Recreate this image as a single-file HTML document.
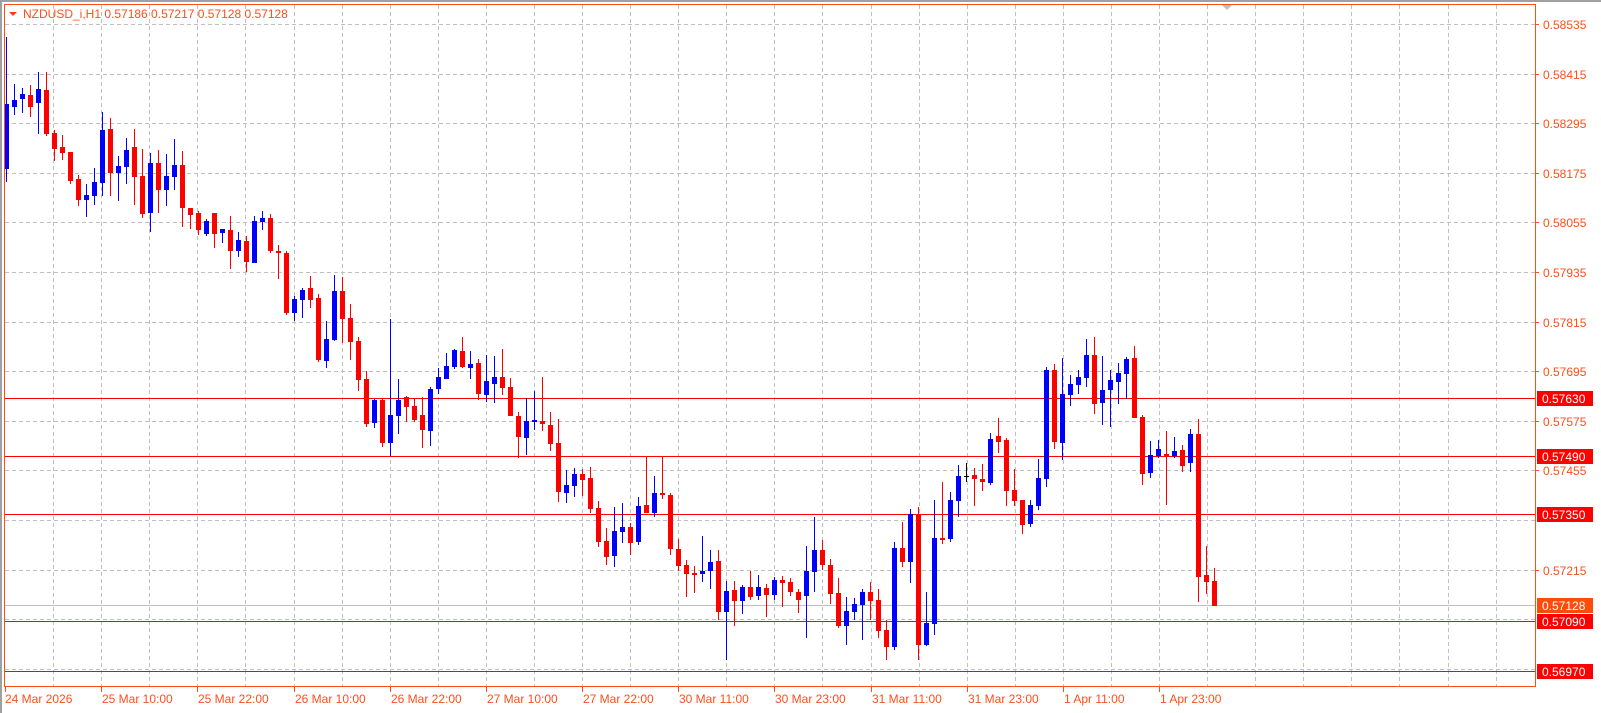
<!DOCTYPE html>
<html><head><meta charset="utf-8"><style>
html,body{margin:0;padding:0;background:#fff;width:1601px;height:713px;overflow:hidden}
svg{display:block;font-family:"Liberation Sans",sans-serif}
</style></head><body>
<svg width="1601" height="713" xmlns="http://www.w3.org/2000/svg">
<rect x="0" y="0" width="1601" height="713" fill="#fff"/>
<rect x="0" y="0" width="1601" height="2" fill="#a0a0a0"/>
<rect x="0" y="0" width="2" height="713" fill="#a0a0a0"/>
<g stroke="#c0c0c0" stroke-dasharray="4,3" stroke-width="1" fill="none">
<path d="M5 24.5H1535M5 74.5H1535M5 123.5H1535M5 173.5H1535M5 222.5H1535M5 272.5H1535M5 322.5H1535M5 371.5H1535M5 421.5H1535M5 470.5H1535M5 520.5H1535M5 570.5H1535M5 619.5H1535M5 669.5H1535"/>
<path d="M53.5 5V687M101.5 5V687M149.5 5V687M197.5 5V687M245.5 5V687M294.5 5V687M342.5 5V687M390.5 5V687M438.5 5V687M486.5 5V687M534.5 5V687M582.5 5V687M630.5 5V687M678.5 5V687M726.5 5V687M774.5 5V687M822.5 5V687M871.5 5V687M919.5 5V687M967.5 5V687M1015.5 5V687M1063.5 5V687M1111.5 5V687M1159.5 5V687M1207.5 5V687M1255.5 5V687M1303.5 5V687M1351.5 5V687M1399.5 5V687M1448.5 5V687M1496.5 5V687"/>
</g>
<path d="M5 605.5H1535" stroke="#c0c0c0" stroke-width="1"/>
<path d="M5 398.5H1535M5 456.5H1535M5 514.5H1535M5 621.5H1535M5 671.5H1535" stroke="#ff0000" stroke-width="1"/>
<path fill="#0000ff" d="
M6 37h1v145h-1zM4 104h5v65h-5z
M14 84h1v31h-1zM12 100h5v7h-5z
M22 88h1v25h-1zM20 94h5v5h-5z
M38 72h1v62h-1zM36 89h5v14h-5z
M86 184h1v33h-1zM84 195h5v5h-5z
M94 168h1v37h-1zM92 182h5v14h-5z
M102 112h1v84h-1zM100 130h5v53h-5z
M118 156h1v45h-1zM116 166h5v7h-5z
M126 138h1v46h-1zM124 150h5v17h-5z
M150 153h1v79h-1zM148 163h5v50h-5z
M166 154h1v52h-1zM164 176h5v14h-5z
M174 139h1v51h-1zM172 165h5v12h-5z
M206 219h1v17h-1zM204 221h5v13h-5z
M222 229h1v14h-1zM220 229h5v4h-5z
M238 232h1v25h-1zM236 240h5v11h-5z
M254 216h1v47h-1zM252 221h5v42h-5z
M262 211h1v19h-1zM260 218h5v4h-5z
M294 296h1v25h-1zM292 299h5v14h-5z
M302 288h1v30h-1zM300 290h5v10h-5z
M326 321h1v47h-1zM324 339h5v22h-5z
M334 275h1v66h-1zM332 291h5v49h-5z
M374 399h1v29h-1zM372 400h5v23h-5z
M390 319h1v137h-1zM388 415h5v28h-5z
M398 379h1v55h-1zM396 400h5v16h-5z
M430 387h1v59h-1zM428 389h5v42h-5z
M438 368h1v26h-1zM436 377h5v12h-5z
M446 353h1v26h-1zM444 366h5v13h-5z
M454 349h1v20h-1zM452 350h5v17h-5z
M470 351h1v28h-1zM468 364h5v4h-5z
M486 355h1v47h-1zM484 381h5v14h-5z
M494 356h1v47h-1zM492 377h5v7h-5z
M526 398h1v57h-1zM524 421h5v17h-5z
M534 391h1v39h-1zM532 420h5v2h-5z
M566 470h1v33h-1zM564 485h5v8h-5z
M574 468h1v29h-1zM572 474h5v12h-5z
M614 507h1v60h-1zM612 531h5v25h-5z
M622 503h1v40h-1zM620 527h5v5h-5z
M638 497h1v48h-1zM636 506h5v36h-5z
M654 476h1v41h-1zM652 493h5v20h-5z
M702 536h1v46h-1zM700 571h5v3h-5z
M710 550h1v39h-1zM708 562h5v9h-5z
M726 581h1v79h-1zM724 591h5v21h-5z
M742 585h1v29h-1zM740 587h5v14h-5z
M758 575h1v25h-1zM756 587h5v9h-5z
M774 577h1v23h-1zM772 580h5v15h-5z
M806 546h1v92h-1zM804 571h5v25h-5z
M814 517h1v75h-1zM812 550h5v22h-5z
M846 597h1v48h-1zM844 611h5v15h-5z
M854 598h1v22h-1zM852 604h5v8h-5z
M862 589h1v51h-1zM860 592h5v13h-5z
M894 542h1v108h-1zM892 548h5v99h-5z
M910 509h1v74h-1zM908 514h5v48h-5z
M926 592h1v54h-1zM924 623h5v22h-5z
M934 500h1v135h-1zM932 538h5v86h-5z
M950 492h1v50h-1zM948 500h5v39h-5z
M958 465h1v52h-1zM956 476h5v25h-5z
M990 433h1v52h-1zM988 439h5v44h-5z
M1030 500h1v27h-1zM1028 505h5v19h-5z
M1038 459h1v51h-1zM1036 478h5v28h-5z
M1046 367h1v120h-1zM1044 370h5v109h-5z
M1062 358h1v102h-1zM1060 394h5v49h-5z
M1070 375h1v31h-1zM1068 384h5v11h-5z
M1078 370h1v24h-1zM1076 377h5v8h-5z
M1086 339h1v48h-1zM1084 355h5v23h-5z
M1102 356h1v69h-1zM1100 390h5v13h-5z
M1110 370h1v57h-1zM1108 380h5v10h-5z
M1118 363h1v41h-1zM1116 373h5v9h-5z
M1126 357h1v42h-1zM1124 359h5v15h-5z
M1150 441h1v37h-1zM1148 455h5v18h-5z
M1158 440h1v18h-1zM1156 449h5v7h-5z
M1174 437h1v21h-1zM1172 451h5v5h-5z
M1190 429h1v43h-1zM1188 434h5v29h-5z"/>
<path fill="#ff0000" d="
M30 85h1v32h-1zM28 95h5v12h-5z
M46 72h1v64h-1zM44 90h5v44h-5z
M54 130h1v31h-1zM52 133h5v16h-5z
M62 135h1v25h-1zM60 147h5v6h-5z
M70 152h1v32h-1zM68 152h5v29h-5z
M78 175h1v31h-1zM76 179h5v21h-5z
M110 118h1v78h-1zM108 129h5v44h-5z
M134 129h1v76h-1zM132 147h5v30h-5z
M142 149h1v69h-1zM140 176h5v38h-5z
M158 150h1v63h-1zM156 163h5v27h-5z
M182 151h1v76h-1zM180 165h5v43h-5z
M190 208h1v21h-1zM188 208h5v7h-5z
M198 211h1v24h-1zM196 213h5v17h-5z
M214 213h1v35h-1zM212 213h5v21h-5z
M230 216h1v53h-1zM228 230h5v21h-5z
M246 236h1v36h-1zM244 241h5v21h-5z
M270 214h1v39h-1zM268 218h5v33h-5z
M278 245h1v34h-1zM276 251h5v2h-5z
M286 251h1v64h-1zM284 253h5v60h-5z
M310 276h1v32h-1zM308 288h5v12h-5z
M318 294h1v68h-1zM316 298h5v62h-5z
M342 277h1v66h-1zM340 291h5v28h-5z
M350 304h1v56h-1zM348 318h5v24h-5z
M358 337h1v54h-1zM356 341h5v39h-5z
M366 371h1v56h-1zM364 379h5v45h-5z
M382 399h1v48h-1zM380 400h5v43h-5z
M406 396h1v26h-1zM404 397h5v10h-5z
M414 399h1v23h-1zM412 406h5v14h-5z
M422 397h1v51h-1zM420 415h5v15h-5z
M462 337h1v31h-1zM460 351h5v16h-5z
M478 359h1v41h-1zM476 363h5v31h-5z
M502 349h1v46h-1zM500 377h5v11h-5z
M510 378h1v38h-1zM508 387h5v29h-5z
M518 412h1v46h-1zM516 416h5v21h-5z
M542 377h1v54h-1zM540 421h5v3h-5z
M550 412h1v39h-1zM548 425h5v19h-5z
M558 419h1v83h-1zM556 443h5v49h-5z
M582 469h1v27h-1zM580 474h5v6h-5z
M590 467h1v46h-1zM588 478h5v31h-5z
M598 501h1v46h-1zM596 508h5v34h-5z
M606 528h1v37h-1zM604 541h5v16h-5z
M630 523h1v32h-1zM628 527h5v16h-5z
M646 456h1v57h-1zM644 505h5v8h-5z
M662 456h1v43h-1zM660 493h5v2h-5z
M670 493h1v62h-1zM668 495h5v54h-5z
M678 539h1v32h-1zM676 549h5v17h-5z
M686 560h1v37h-1zM684 565h5v9h-5z
M694 566h1v27h-1zM692 573h5v2h-5z
M718 550h1v70h-1zM716 561h5v51h-5z
M734 581h1v45h-1zM732 590h5v11h-5z
M750 571h1v29h-1zM748 587h5v10h-5z
M766 584h1v33h-1zM764 588h5v7h-5z
M782 576h1v31h-1zM780 580h5v3h-5z
M790 578h1v18h-1zM788 582h5v10h-5z
M798 589h1v24h-1zM796 592h5v8h-5z
M822 540h1v30h-1zM820 550h5v15h-5z
M830 559h1v45h-1zM828 565h5v29h-5z
M838 578h1v50h-1zM836 593h5v33h-5z
M870 582h1v38h-1zM868 592h5v9h-5z
M878 589h1v49h-1zM876 600h5v31h-5z
M886 620h1v40h-1zM884 630h5v17h-5z
M902 522h1v45h-1zM900 548h5v14h-5z
M918 507h1v153h-1zM916 514h5v131h-5z
M942 482h1v62h-1zM940 538h5v2h-5z
M974 468h1v38h-1zM972 475h5v4h-5z
M982 464h1v27h-1zM980 479h5v3h-5z
M998 418h1v35h-1zM996 436h5v6h-5z
M1006 438h1v68h-1zM1004 440h5v51h-5z
M1014 469h1v37h-1zM1012 490h5v11h-5z
M1022 500h1v34h-1zM1020 500h5v25h-5z
M1054 364h1v85h-1zM1052 370h5v72h-5z
M1094 337h1v77h-1zM1092 355h5v49h-5z
M1134 346h1v72h-1zM1132 358h5v60h-5z
M1142 415h1v70h-1zM1140 417h5v57h-5z
M1166 431h1v74h-1zM1164 454h5v2h-5z
M1182 445h1v27h-1zM1180 450h5v16h-5z
M1198 419h1v183h-1zM1196 434h5v143h-5z
M1206 546h1v48h-1zM1204 575h5v7h-5z
M1214 568h1v38h-1zM1212 581h5v25h-5z"/>
<path fill="#000" d="M966 463h1v19h-1zM964 476h5v1h-5z"/>
<rect x="4.5" y="4.5" width="1531" height="682" fill="none" stroke="#ff4f14" stroke-width="1"/>
<path d="M1222 5h10l-5 5z" fill="#c0c0c0"/>
<g font-size="12" fill="#ff4f1a">
<path d="M9 12h8l-4 4z" fill="#ff3c0a"/>
<text x="23" y="18">NZDUSD_i,H1  0.57186 0.57217 0.57128 0.57128</text>
<path d="M1535 24.5h4M1535 74.5h4M1535 123.5h4M1535 173.5h4M1535 222.5h4M1535 272.5h4M1535 322.5h4M1535 371.5h4M1535 421.5h4M1535 470.5h4M1535 570.5h4" stroke="#ff4f14"/>
<text x="1543" y="29">0.58535</text>
<text x="1543" y="79">0.58415</text>
<text x="1543" y="128">0.58295</text>
<text x="1543" y="178">0.58175</text>
<text x="1543" y="227">0.58055</text>
<text x="1543" y="277">0.57935</text>
<text x="1543" y="327">0.57815</text>
<text x="1543" y="376">0.57695</text>
<text x="1543" y="426">0.57575</text>
<text x="1543" y="475">0.57455</text>
<text x="1543" y="575">0.57215</text>
<rect x="1537" y="391" width="56" height="15" fill="#ff0000"/><text x="1542" y="403" fill="#fff">0.57630</text>
<rect x="1537" y="449" width="56" height="15" fill="#ff0000"/><text x="1542" y="461" fill="#fff">0.57490</text>
<rect x="1537" y="507" width="56" height="15" fill="#ff0000"/><text x="1542" y="519" fill="#fff">0.57350</text>
<rect x="1537" y="598" width="56" height="15" fill="#ff4c0c"/><text x="1542" y="610" fill="#fff">0.57128</text>
<rect x="1537" y="614" width="56" height="15" fill="#ff0000"/><text x="1542" y="626" fill="#fff">0.57090</text>
<rect x="1537" y="664" width="56" height="15" fill="#ff0000"/><text x="1542" y="676" fill="#fff">0.56970</text>
<path d="M5.5 687v5M101.5 687v5M197.5 687v5M294.5 687v5M390.5 687v5M486.5 687v5M582.5 687v5M678.5 687v5M774.5 687v5M871.5 687v5M967.5 687v5M1063.5 687v5M1159.5 687v5" stroke="#ff4f14"/>
<text x="5" y="703">24 Mar 2026</text>
<text x="102" y="703">25 Mar 10:00</text>
<text x="198" y="703">25 Mar 22:00</text>
<text x="295" y="703">26 Mar 10:00</text>
<text x="391" y="703">26 Mar 22:00</text>
<text x="487" y="703">27 Mar 10:00</text>
<text x="583" y="703">27 Mar 22:00</text>
<text x="679" y="703">30 Mar 11:00</text>
<text x="775" y="703">30 Mar 23:00</text>
<text x="872" y="703">31 Mar 11:00</text>
<text x="968" y="703">31 Mar 23:00</text>
<text x="1064" y="703">1 Apr 11:00</text>
<text x="1160" y="703">1 Apr 23:00</text>
</g>
</svg>
</body></html>
